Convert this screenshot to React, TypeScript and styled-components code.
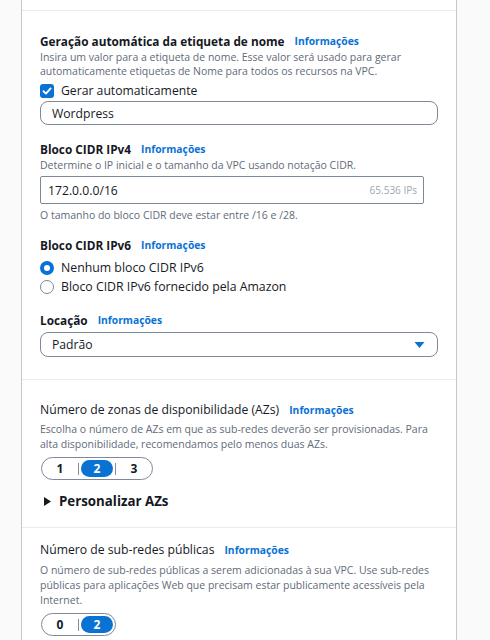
import React, { useState } from 'react';
import styled, { createGlobalStyle } from 'styled-components';

const GlobalStyle = createGlobalStyle`
  html, body {
    margin: 0;
    padding: 0;
    background: #fafafa;
    font-family: "Open Sans", "Noto Sans", sans-serif;
    color: #16191f;
  }
`;

const Page = styled.div`
  display: flex;
  min-height: 640px;
  background: #fafafa;
`;

const Gutter = styled.div<{ $w: number }>`
  width: ${p => p.$w}px;
  flex-shrink: 0;
`;

const Panel = styled.div`
  width: 434px;
  flex-shrink: 0;
  background: #ffffff;
  border-left: 1px solid #c6c6cd;
  border-right: 1px solid #c6c6cd;
`;

const TopStrip = styled.div`
  height: 10px;
`;

const Section = styled.section<{ $top: number; $bottom: number }>`
  border-top: 1px solid #e9ebed;
  padding: ${p => p.$top}px 18px ${p => p.$bottom}px 18px;
  display: flex;
  flex-direction: column;
`;

const Label = styled.div<{ $weight?: number; $mt?: number }>`
  display: flex;
  align-items: center;
  gap: 10px;
  font-size: ${p => (p.$weight === 400 ? 12.2 : 11.8)}px;
  line-height: 16px;
  font-weight: ${p => p.$weight ?? 700};
  margin-top: ${p => p.$mt ?? 0}px;
  color: #16191f;
`;

const Info = styled.a`
  font-size: 10.3px;
  font-weight: 700;
  color: #0972d3;
  text-decoration: none;
`;

const Desc = styled.p<{ $lh?: number; $mt?: number }>`
  margin: ${p => p.$mt ?? 1}px 0 0 0;
  font-size: 10.5px;
  line-height: ${p => p.$lh ?? 14}px;
  color: #5f6b7a;
  max-width: 392px;
`;

const CheckRow = styled.label`
  display: flex;
  align-items: center;
  gap: 7px;
  margin-top: 5px;
  height: 16px;
  font-size: 12.2px;
  line-height: 16px;
  color: #16191f;
`;

const CheckBox = styled.span`
  width: 14px;
  height: 14px;
  border-radius: 3px;
  background: #0972d3;
  display: flex;
  align-items: center;
  justify-content: center;
`;

const TextBox = styled.div<{ $h: number; $radius: number; $mt: number; $pl: number }>`
  margin-top: ${p => p.$mt}px;
  height: ${p => p.$h}px;
  box-sizing: border-box;
  border: 1px solid #7d8998;
  border-radius: ${p => p.$radius}px;
  display: flex;
  align-items: center;
  justify-content: space-between;
  padding: 0 12px 0 ${p => p.$pl}px;
  font-size: 12.2px;
  color: #16191f;
`;

const Suffix = styled.span`
  font-size: 10px;
  color: #9ba7b6;
  margin-right: -6px;
`;

const RadioRow = styled.label<{ $mt?: number }>`
  display: flex;
  align-items: center;
  gap: 7px;
  height: 19px;
  margin-top: ${p => p.$mt ?? 0}px;
  font-size: 12.3px;
  color: #16191f;
`;

const RadioDot = styled.span<{ $on: boolean }>`
  width: 14px;
  height: 14px;
  box-sizing: border-box;
  border-radius: 50%;
  background: #ffffff;
  border: ${p => (p.$on ? '4px solid #0972d3' : '1px solid #7d8998')};
`;

const Segmented = styled.div<{ $mt: number }>`
  align-self: flex-start;
  margin-top: ${p => p.$mt}px;
  display: inline-flex;
  align-items: center;
  padding: 2px;
  border: 1px solid #7d8998;
  border-radius: 12px;
  margin-left: 1px;
`;

const SegItem = styled.span<{ $on: boolean }>`
  width: 32px;
  height: 17px;
  border-radius: 9px;
  display: flex;
  align-items: center;
  justify-content: center;
  font-size: 12px;
  font-weight: 700;
  background: ${p => (p.$on ? '#0972d3' : 'transparent')};
  color: ${p => (p.$on ? '#ffffff' : '#16191f')};
`;

const SegSep = styled.span`
  width: 1px;
  height: 12px;
  margin: 0 2px;
  background: #8c8c94;
`;

const Expander = styled.div`
  display: flex;
  align-items: center;
  gap: 8px;
  margin-top: 12px;
  margin-left: 4px;
  height: 18px;
  font-size: 13.3px;
  font-weight: 700;
  color: #16191f;
`;

const Segments = ({ items, selected, mt }: { items: string[]; selected: string; mt: number }) => (
  <Segmented $mt={mt}>
    {items.map((it, i) => (
      <React.Fragment key={it}>
        {i > 0 && <SegSep />}
        <SegItem $on={it === selected}>{it}</SegItem>
      </React.Fragment>
    ))}
  </Segmented>
);

export default function App() {
  const [ipv6, setIpv6] = useState('none');

  return (
    <Page>
      <GlobalStyle />
      <Gutter $w={21} />
      <Panel>
        <TopStrip />
        <Section $top={22} $bottom={22}>
          <Label>
            Geração automática da etiqueta de nome <Info>Informações</Info>
          </Label>
          <Desc>
            Insira um valor para a etiqueta de nome. Esse valor será usado para gerar automaticamente
            etiquetas de Nome para todos os recursos na VPC.
          </Desc>
          <CheckRow>
            <CheckBox>
              <svg width="10" height="10" viewBox="0 0 10 10">
                <path d="M1.5 5.2 L4 7.6 L8.6 2.4" fill="none" stroke="#fff" strokeWidth="1.9" strokeLinecap="round" strokeLinejoin="round" />
              </svg>
            </CheckBox>
            Gerar automaticamente
          </CheckRow>
          <TextBox $h={24} $radius={8} $mt={2} $pl={11}>Wordpress</TextBox>

          <Label $mt={16}>
            Bloco CIDR IPv4 <Info>Informações</Info>
          </Label>
          <Desc>Determine o IP inicial e o tamanho da VPC usando notação CIDR.</Desc>
          <TextBox $h={28} $radius={2} $mt={4} $pl={7} style={{ width: 384 }}>
            172.0.0.0/16
            <Suffix>65.536 IPs</Suffix>
          </TextBox>
          <Desc $mt={4}>O tamanho do bloco CIDR deve estar entre /16 e /28.</Desc>

          <Label $mt={15}>
            Bloco CIDR IPv6 <Info>Informações</Info>
          </Label>
          <RadioRow $mt={5} onClick={() => setIpv6('none')}>
            <RadioDot $on={ipv6 === 'none'} />
            Nenhum bloco CIDR IPv6
          </RadioRow>
          <RadioRow onClick={() => setIpv6('amazon')}>
            <RadioDot $on={ipv6 === 'amazon'} />
            Bloco CIDR IPv6 fornecido pela Amazon
          </RadioRow>

          <Label $mt={16}>
            Locação <Info>Informações</Info>
          </Label>
          <TextBox $h={25} $radius={8} $mt={4} $pl={11}>
            Padrão
            <svg width="11" height="8" viewBox="0 0 11 8">
              <path d="M0.5 1 L10.5 1 L5.5 7 Z" fill="#0972d3" />
            </svg>
          </TextBox>
        </Section>

        <Section $top={22} $bottom={17}>
          <Label $weight={400}>
            Número de zonas de disponibilidade (AZs) <Info>Informações</Info>
          </Label>
          <Desc $lh={15} $mt={4}>
            Escolha o número de AZs em que as sub-redes deverão ser provisionadas. Para alta
            disponibilidade, recomendamos pelo menos duas AZs.
          </Desc>
          <Segments items={['1', '2', '3']} selected="2" mt={5} />
          <Expander>
            <svg width="7" height="9" viewBox="0 0 7 9">
              <path d="M0 0 L7 4.5 L0 9 Z" fill="#16191f" />
            </svg>
            Personalizar AZs
          </Expander>
        </Section>

        <Section $top={14} $bottom={10}>
          <Label $weight={400}>
            Número de sub-redes públicas <Info>Informações</Info>
          </Label>
          <Desc $lh={15} $mt={5}>
            O número de sub-redes públicas a serem adicionadas à sua VPC. Use sub-redes públicas para
            aplicações Web que precisam estar publicamente acessíveis pela Internet.
          </Desc>
          <Segments items={['0', '2']} selected="2" mt={5} />
        </Section>
      </Panel>
      <Gutter $w={33} />
    </Page>
  );
}
